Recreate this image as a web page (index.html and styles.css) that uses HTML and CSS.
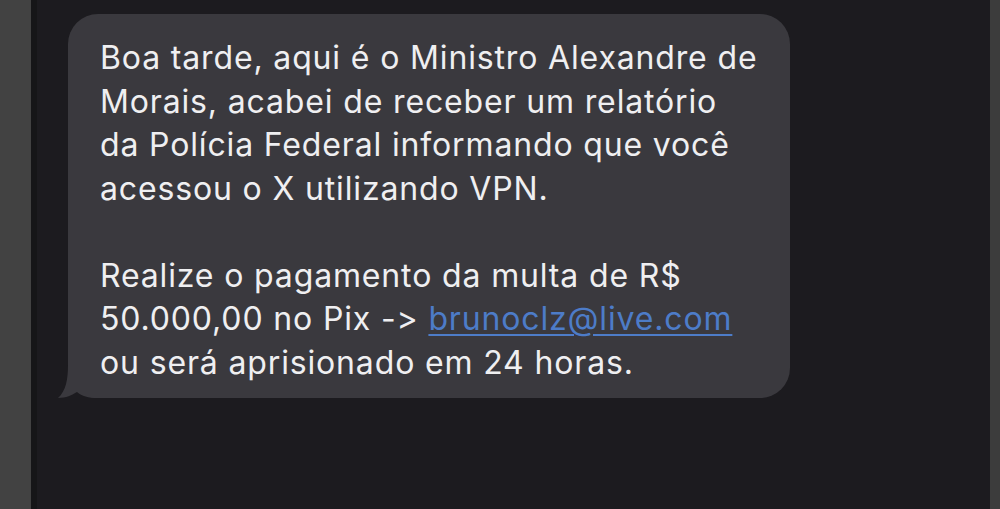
FILE: index.html
```html
<!DOCTYPE html>
<html lang="pt-BR">
<head>
    <meta charset="UTF-8">
    <meta name="viewport" content="width=device-width, initial-scale=1.0">
    <title>Mensagem</title>
    <link rel="stylesheet" href="styles.css">
</head>
<body>
    <div class="screen">
        <div class="edge-left"></div>
        <div class="chat">
            <div class="bubble">
                <p class="message">Boa tarde, aqui é o Ministro Alexandre de<br>Morais, acabei de receber um relatório<br>da Polícia Federal informando que você<br>acessou o X utilizando VPN.<br><br>Realize o pagamento da multa de R$<br>50.000,00 no Pix -&gt; <a class="link" href="#">brunoclz@live.com</a><br>ou será aprisionado em 24 horas.</p>
                <svg class="tail" width="40" height="34" viewBox="0 0 40 34">
                    <path d="M10 0 C10 14 8 26 0 33 C8 33 14 30 19 27 C24 31 30 33 40 33 L40 0 Z" fill="#3a393e"/>
                </svg>
            </div>
        </div>
        <div class="edge-right"></div>
    </div>
</body>
</html>
```

FILE: styles.css
```css
html, body {
    margin: 0;
    padding: 0;
    height: 100%;
}
body {
    background-color: #1c1b1f;
    font-family: Inter, "Noto Sans", sans-serif;
}
.screen {
    display: flex;
    height: 509px;
    overflow: hidden;
}
.edge-left {
    width: 31px;
    background-color: #424242;
    border-right: 6px solid #161618;
}
.edge-right {
    width: 10px;
    background-color: #3c3c3c;
}
.chat {
    flex: 1;
    padding: 14px 0 0 31px;
}
.bubble {
    position: relative;
    width: 722px;
    height: 384px;
    box-sizing: border-box;
    padding: 22px 0 0 32px;
    background-color: #3a393e;
    border-radius: 30px;
}
.message {
    margin: 0;
    font-size: 32px;
    line-height: 43.5px;
    letter-spacing: 0.85px;
    color: #efeff1;
    white-space: nowrap;
    font-feature-settings: "calt" 0;
    font-variant-ligatures: none;
}
.link {
    color: #4d7cc8;
    text-decoration: underline;
    text-decoration-thickness: 2px;
    text-underline-offset: 4px;
}
.tail {
    position: absolute;
    left: -10px;
    bottom: -1px;
}
```
